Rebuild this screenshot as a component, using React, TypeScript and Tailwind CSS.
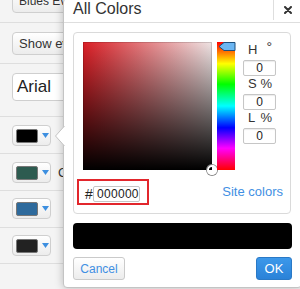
import React from "react";

function SwatchButton({ color }: { color: string }) {
  return (
    <div className="flex h-[21px] w-[39px] items-center rounded-[4px] border border-[#cfcfcf] bg-[linear-gradient(#ffffff,#ececec)] pl-[3px]">
      <div className="h-[14px] w-[22px] rounded-[2px] border border-[#777]" style={{ backgroundColor: color }} />
      <svg width="7" height="5" viewBox="0 0 7 5" className="ml-[4px]">
        <polygon points="0,0 7,0 3.5,5" fill="#3d8fe0" />
      </svg>
    </div>
  );
}

function HslField({ label, unit }: { label: string; unit: string }) {
  return (
    <>
      <div className="mt-[1px] flex h-[13px] items-center justify-between pl-[5px] pr-[4px] text-[13px] leading-[13px] text-[#333]">
        <span>{label}</span>
        <span className={unit === "°" ? "text-[14px] -mt-[4px]" : ""}>{unit}</span>
      </div>
      <div className="mt-[4px] flex h-[16px] w-[33px] items-center justify-center rounded-[2px] border border-[#c6c6c6] bg-white text-[12px] text-[#222] shadow-[inset_0_1px_1px_rgba(0,0,0,0.08)]">
        0
      </div>
    </>
  );
}

export default function App() {
  return (
    <div className="relative h-[289px] w-[300px] overflow-hidden bg-[#f4f4f4] font-['Liberation_Sans',Arial,sans-serif] text-[#333]">
      {/* Background panel rows */}
      <div className="flex flex-col">
        <div className="h-[23px] border-b border-[#dedede] pl-[12px]">
          <div className="mt-[-11px] h-[24px] w-[120px] rounded-[4px] border border-[#cfcfcf] bg-[linear-gradient(#ffffff,#ececec)] pl-[6px] text-[12px] leading-[22px]">
            Blues Events
          </div>
        </div>
        <div className="h-[41px] border-b border-[#dedede] pl-[12px] pt-[9px]">
          <div className="h-[23px] w-[120px] rounded-[4px] border border-[#cfcfcf] bg-[linear-gradient(#ffffff,#ececec)] pl-[6px] text-[13px] leading-[21px]">
            Show events
          </div>
        </div>
        <div className="h-[53px] border-b border-[#dedede] pl-[12px] pt-[9px]">
          <div className="h-[28px] w-[120px] rounded-[4px] border border-[#cfcfcf] bg-white pl-[4px] text-[17px] leading-[26px] text-[#222]">
            Arial
          </div>
        </div>
        <div className="h-[37px] border-b border-[#dedede] pl-[12px] pt-[8px]">
          <SwatchButton color="#000000" />
        </div>
        <div className="flex h-[37px] items-start border-b border-[#dedede] pl-[12px] pt-[8px]">
          <SwatchButton color="#2d5b50" />
          <span className="ml-[7px] text-[13px] leading-[21px]">Custom</span>
        </div>
        <div className="h-[37px] border-b border-[#dedede] pl-[12px] pt-[7px]">
          <SwatchButton color="#2e6a9c" />
        </div>
        <div className="h-[36px] border-b border-[#dedede] pl-[12px] pt-[7px]">
          <SwatchButton color="#222222" />
        </div>
      </div>

      {/* Dialog */}
      <div className="absolute left-[63px] top-[-2px] flex h-[290px] w-[239px] flex-col rounded-[4px] border border-[#c4c4c4] bg-white shadow-[0_0_8px_rgba(0,0,0,0.25)]">
        <div className="flex h-[24px] shrink-0 items-start border-b border-[#dedede]">
          <div className="flex-1 pl-[9px] pt-[2px] text-[16px] leading-[16px] text-[#333]">All Colors</div>
          <div className="flex h-[21px] w-[28px] items-center justify-center border-l border-[#dedede] pt-[1px]">
            <svg width="8" height="8" viewBox="0 0 8 8">
              <path d="M1 1 L7 7 M7 1 L1 7" stroke="#333" strokeWidth="2" strokeLinecap="round" />
            </svg>
          </div>
        </div>

        <div className="flex flex-col px-[9px]">
          {/* inner picker box */}
          <div className="mt-[9px] h-[182px] w-[218px] rounded-[4px] border border-[#dadada] bg-white p-[9px]">
            <div className="flex items-start">
              <div className="relative h-[128px] w-[129px] bg-[linear-gradient(to_right,#dc1f26,#efe4e4)] shadow-[inset_0_0_0_1px_rgba(0,0,0,0.15)]">
                <div className="absolute inset-0 bg-[linear-gradient(to_bottom,rgba(0,0,0,0),#000)]" />
                <div className="absolute bottom-[-5px] right-[-5px] h-[10px] w-[10px] rounded-full border-[2px] border-white shadow-[0_0_0_1px_#8a8a8a]" />
              </div>
              <div className="relative ml-[5px] h-[128px] w-[18px] bg-[linear-gradient(to_bottom,#ff0000_0%,#ffff00_17%,#00ff00_33%,#00ffff_50%,#0000ff_67%,#ff00ff_83%,#ff0000_100%)]">
                <svg width="18" height="10" viewBox="0 0 18 10" className="absolute left-[1px] top-0">
                  <polygon points="1,4.5 6,0.5 17,0.5 17,8.5 6,8.5" fill="#6cb6f2" stroke="#1d4f7c" strokeWidth="1" />
                </svg>
              </div>
              <div className="ml-[8px] flex w-[33px] flex-col">
                <HslField label="H" unit="°" />
                <HslField label="S" unit="%" />
                <HslField label="L" unit="%" />
              </div>
            </div>
            <div className="mt-[9px] flex items-center justify-between">
              <div className="ml-[-6px] flex h-[26px] w-[72px] items-start border-2 border-[#e2262c] pl-[6px] pt-[5px]">
                <span className="mt-[-1px] w-[8px] text-[14px] leading-[18px] text-[#222]">#</span>
                <div className="h-[16px] w-[47px] rounded-[2px] border border-[#c6c6c6] bg-white pl-[3px] text-[12px] leading-[14px] tracking-[0.3px] text-[#222]">
                  000000
                </div>
              </div>
              <span className="mr-[-2px] text-[13px] text-[#3f8fe3]">Site colors</span>
            </div>
          </div>

          <div className="mt-[9px] h-[26px] w-[219px] rounded-[4px] bg-black" />

          <div className="mt-[8px] flex w-[219px] justify-between">
            <div className="flex h-[23px] w-[52px] items-center justify-center rounded-[3px] border border-[#cacaca] bg-[linear-gradient(#ffffff,#ececec)] text-[12px] text-[#3f8fe3]">
              Cancel
            </div>
            <div className="flex h-[23px] w-[36px] items-center justify-center rounded-[3px] border border-[#2a79c6] bg-[linear-gradient(#3c98ea,#2a82d8)] text-[13px] text-white">
              OK
            </div>
          </div>
        </div>
      </div>

      {/* popover arrow */}
      <svg width="10" height="20" viewBox="0 0 10 20" className="absolute left-[55px] top-[126px]">
        <polygon points="9.5,0 0.5,10 9.5,20" fill="#ffffff" />
        <polyline points="9.5,0 0.5,10 9.5,20" fill="none" stroke="#c4c4c4" strokeWidth="1" />
      </svg>
    </div>
  );
}
